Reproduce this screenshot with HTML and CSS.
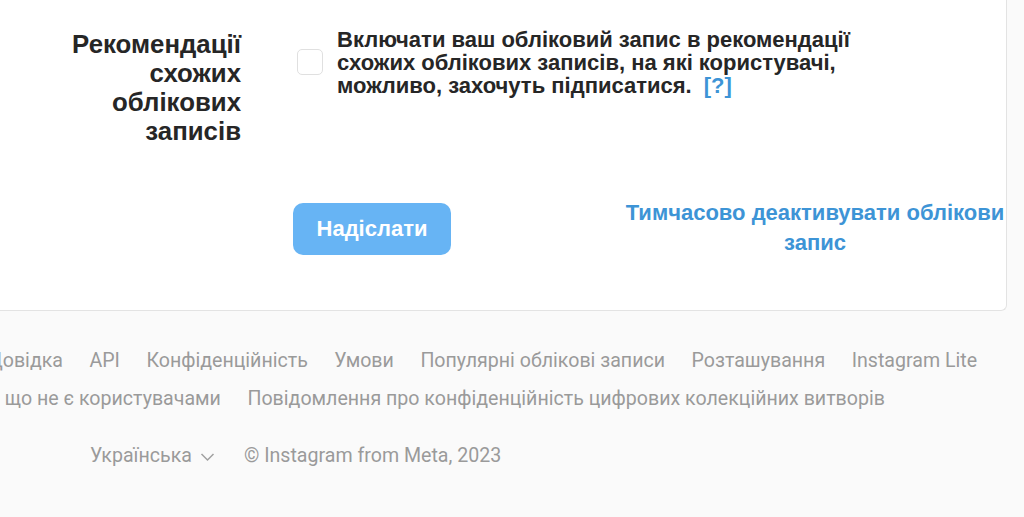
FILE: index.html
```html
<!DOCTYPE html>
<html lang="uk">
<head>
<meta charset="utf-8">
<title>Рекомендації</title>
<link rel="stylesheet" href="styles.css">
</head>
<body>
<main class="card">
  <div class="form-row">
    <div class="label">Рекомендації схожих облікових записів</div>
    <div class="field">
      <span class="checkbox"></span>
      <p class="desc">Включати ваш обліковий запис в рекомендації схожих облікових записів, на які користувачі, можливо, захочуть підписатися. <a class="help" href="#">[?]</a></p>
    </div>
  </div>
  <div class="actions">
    <button class="submit" type="button">Надіслати</button>
    <a class="deactivate" href="#">Тимчасово деактивувати облікови запис</a>
  </div>
</main>
<footer class="footer">
  <nav class="links row1">
    <a href="#">Довідка</a>
    <a href="#">API</a>
    <a href="#">Конфіденційність</a>
    <a href="#">Умови</a>
    <a href="#">Популярні облікові записи</a>
    <a href="#">Розташування</a>
    <a href="#">Instagram Lite</a>
  </nav>
  <nav class="links row2">
    <a href="#">Контакти, що не є користувачами</a>
    <a href="#">Повідомлення про конфіденційність цифрових колекційних витворів</a>
  </nav>
  <div class="links row3">
    <span class="lang">Українська
      <svg class="chev" width="15" height="10" viewBox="0 0 15 10"><path d="M1.5 2 L7.5 8 L13.5 2" fill="none" stroke="#a0a0a0" stroke-width="1.5"/></svg>
    </span>
    <span>© Instagram from Meta, 2023</span>
  </div>
</footer>
</body>
</html>
```
FILE: styles.css
```css
* { box-sizing: border-box; }
html, body { margin: 0; padding: 0; }
body {
  background: #fafafa;
  width: 1024px;
  height: 517px;
  overflow: hidden;
  font-family: "Liberation Sans", Arial, sans-serif;
}
.card {
  width: 1007px;
  height: 311px;
  background: #fff;
  border-right: 1px solid #e3e3e3;
  border-bottom: 1px solid #e3e3e3;
  border-radius: 0 0 6px 0;
  padding-top: 28px;
}
.form-row {
  display: flex;
  align-items: flex-start;
}
.label {
  width: 241px;
  text-align: right;
  font-weight: bold;
  font-size: 25.8px;
  line-height: 29px;
  color: #262626;
  padding-left: 50px;
  margin-top: 2px;
}
.field {
  display: flex;
  align-items: flex-start;
  margin-left: 56px;
}
.checkbox {
  flex: none;
  width: 26px;
  height: 26px;
  border: 1.5px solid #e0e0e0;
  border-radius: 5px;
  margin-top: 21px;
}
.desc {
  margin: 0 0 0 14px;
  width: 525px;
  font-weight: bold;
  font-size: 22px;
  line-height: 23px;
  color: #262626;
}
.help {
  color: #3d94d6;
  font-weight: bold;
  text-decoration: none;
  margin-left: 6px;
}
.actions {
  display: flex;
  align-items: flex-start;
  margin-top: 57px;
}
.submit {
  margin-left: 293px;
  width: 163px;
  height: 52px;
  border: none;
  border-radius: 10px;
  background: #67b4f4;
  color: #fff;
  font-family: "Liberation Sans", Arial, sans-serif;
  font-weight: bold;
  font-size: 22px;
  padding: 0;
}
.deactivate {
  margin-left: 173px;
  width: 394px;
  text-align: center;
  color: #3d94d6;
  font-weight: bold;
  font-size: 22px;
  line-height: 30px;
  text-decoration: none;
  margin-top: -5px;
}
.footer {
  font-family: Roboto, "Liberation Sans", sans-serif;
  font-size: 19.6px;
  color: #9a9a9a;
}
.links {
  display: flex;
  gap: 26.5px;
  white-space: nowrap;
  line-height: 24px;
}
.links a { color: #9a9a9a; text-decoration: none; }
.row1 { margin-top: 38px; margin-left: -12px; }
.row2 { margin-top: 14px; margin-left: -90px; }
.row3 { margin-top: 33px; margin-left: 90px; gap: 29px; }
.lang { display: inline-flex; align-items: center; gap: 8px; }
.chev { margin-top: 2px; }
```
